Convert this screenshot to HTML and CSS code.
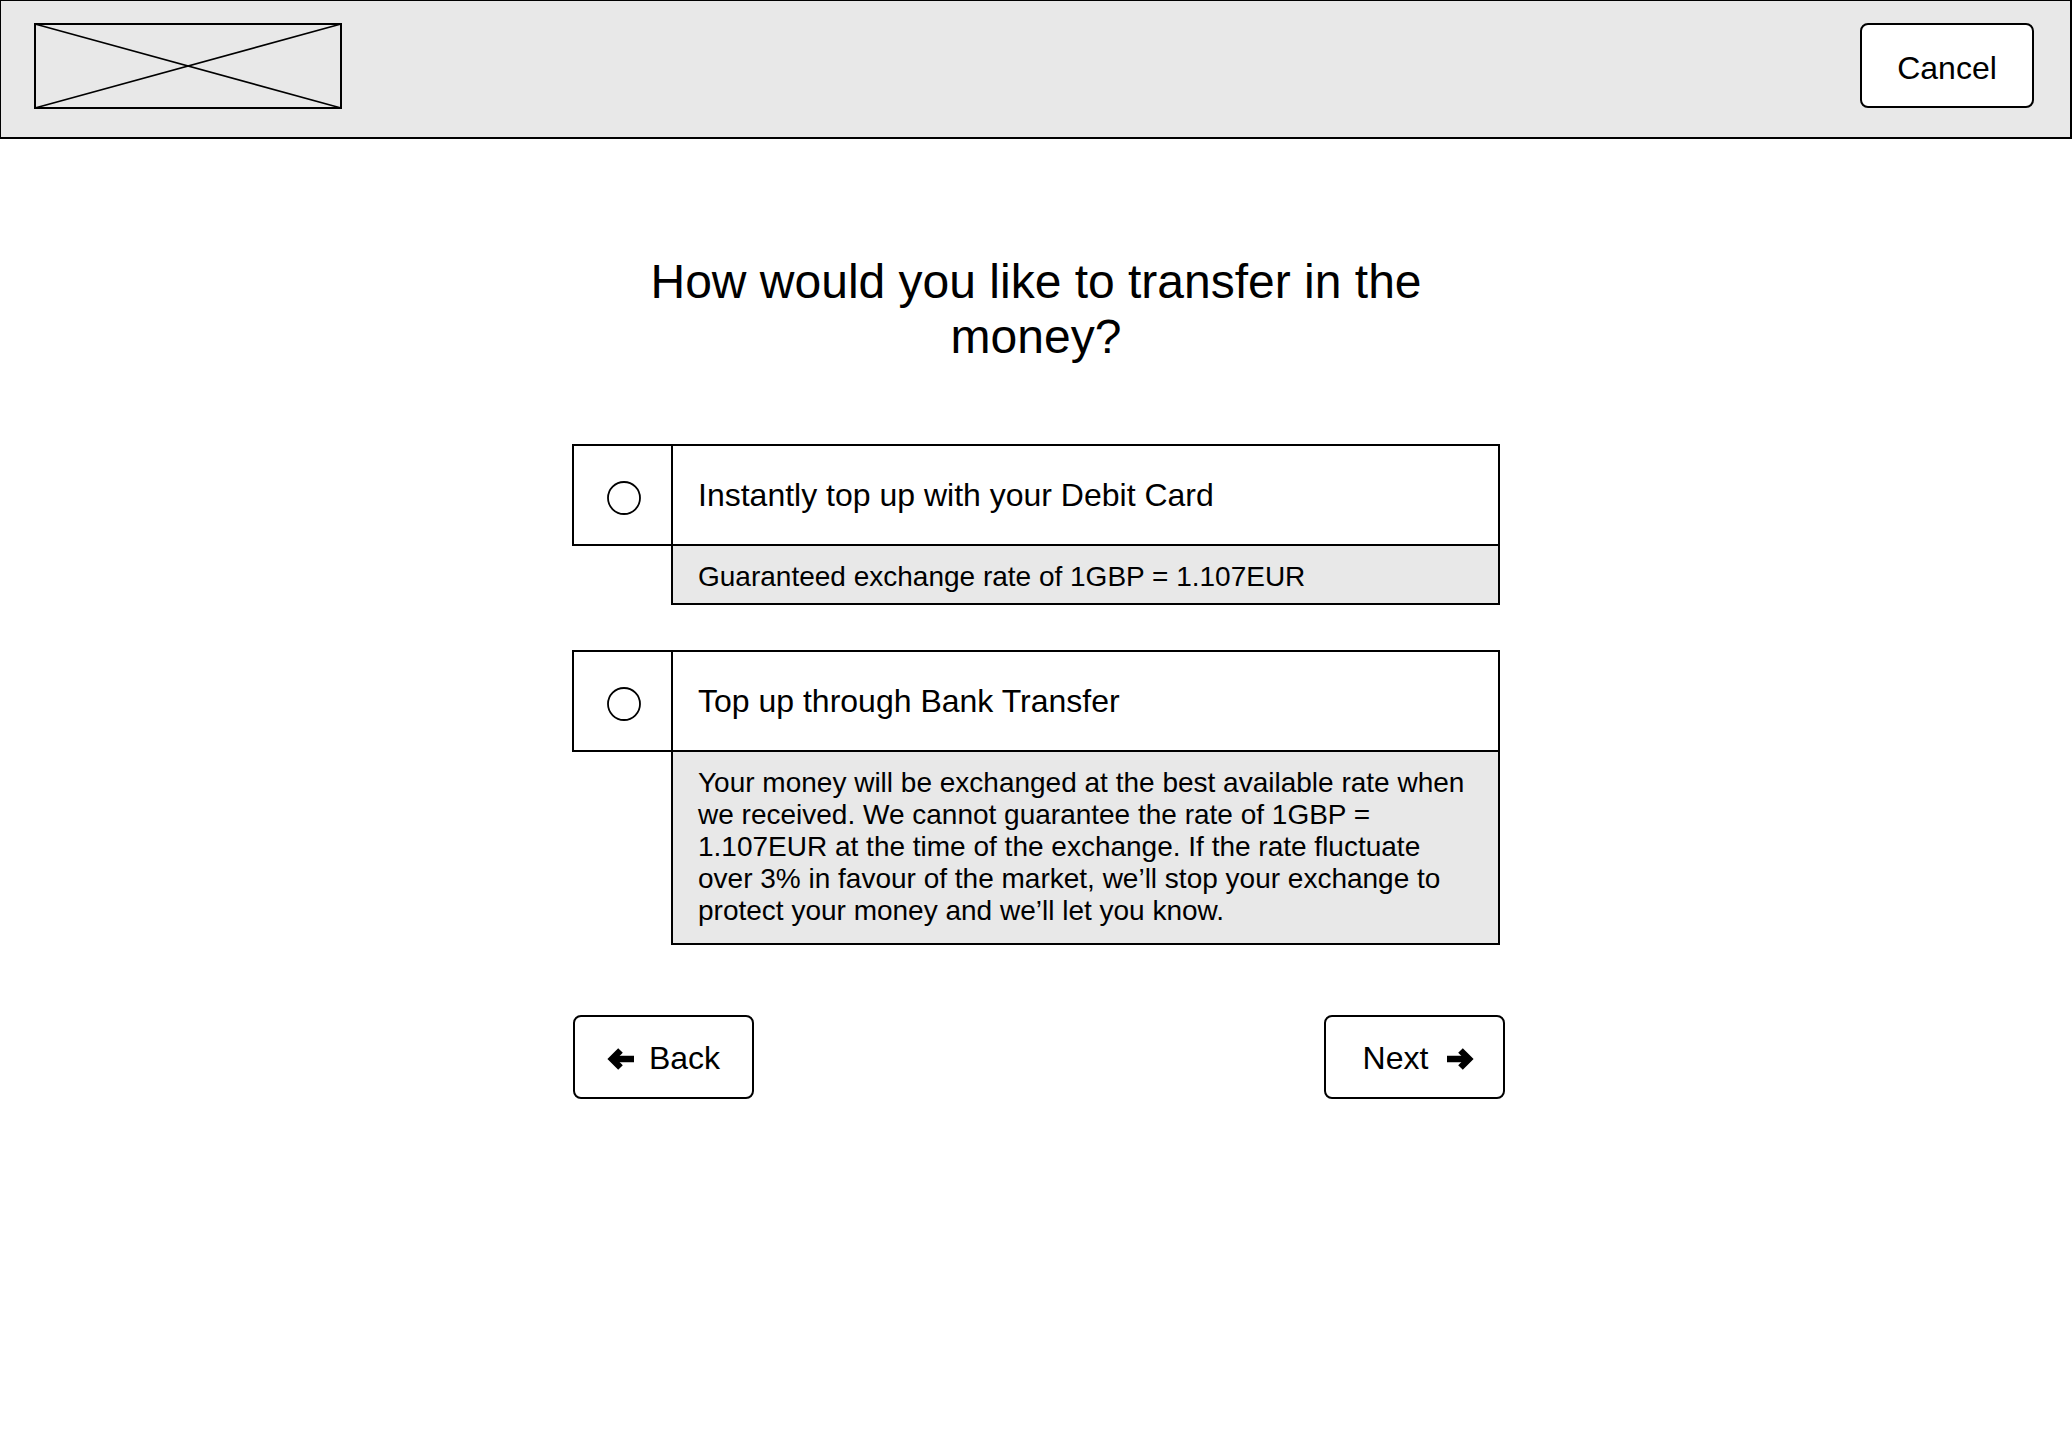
FILE: index.html
```html
<!DOCTYPE html>
<html lang="en">
<head>
<meta charset="utf-8">
<title>Top up</title>
<link rel="stylesheet" href="styles.css">
</head>
<body>
<header class="topbar">
  <svg class="logo" width="308" height="86" viewBox="0 0 308 86" aria-hidden="true">
    <rect x="1" y="1" width="306" height="84" fill="none" stroke="#000" stroke-width="2"/>
    <line x1="1" y1="1" x2="307" y2="85" stroke="#000" stroke-width="1.6"/>
    <line x1="1" y1="85" x2="307" y2="1" stroke="#000" stroke-width="1.6"/>
  </svg>
  <button class="btn btn-cancel">Cancel</button>
</header>

<main class="content">
  <h1 class="question">How would you like to transfer in the money?</h1>

  <div class="option">
    <div class="radio-cell">
      <svg width="36" height="36" viewBox="0 0 36 36" aria-hidden="true"><circle cx="18" cy="18" r="16" fill="#fff" stroke="#000" stroke-width="1.8"/></svg>
    </div>
    <div class="title-cell">Instantly top up with your Debit Card</div>
    <div class="desc-cell desc-short">Guaranteed exchange rate of 1GBP = 1.107EUR</div>
  </div>

  <div class="option option-second">
    <div class="radio-cell">
      <svg width="36" height="36" viewBox="0 0 36 36" aria-hidden="true"><circle cx="18" cy="18" r="16" fill="#fff" stroke="#000" stroke-width="1.8"/></svg>
    </div>
    <div class="title-cell">Top up through Bank Transfer</div>
    <div class="desc-cell desc-long">Your money will be exchanged at the best available rate when we received. We cannot guarantee the rate of 1GBP = 1.107EUR at the time of the exchange. If the rate fluctuate over 3% in favour of the market, we’ll stop your exchange to protect your money and we’ll let you know.</div>
  </div>

  <div class="nav">
    <button class="btn btn-nav btn-back">
      <svg class="arrow" width="28" height="22" viewBox="0 0 28 22" aria-hidden="true">
        <path d="M27 11 H6" stroke="#000" stroke-width="6.5" fill="none"/>
        <path d="M13.5 2.5 L5 11 L13.5 19.5" stroke="#000" stroke-width="6.5" fill="none" stroke-linejoin="miter"/>
      </svg>
      <span>Back</span>
    </button>
    <button class="btn btn-nav btn-next">
      <span>Next</span>
      <svg class="arrow" width="28" height="22" viewBox="0 0 28 22" aria-hidden="true">
        <path d="M1 11 H22" stroke="#000" stroke-width="6.5" fill="none"/>
        <path d="M14.5 2.5 L23 11 L14.5 19.5" stroke="#000" stroke-width="6.5" fill="none" stroke-linejoin="miter"/>
      </svg>
    </button>
  </div>
</main>
</body>
</html>
```

FILE: styles.css
```css
* { box-sizing: border-box; }

html, body {
  margin: 0;
  padding: 0;
  background: #ffffff;
  color: #000000;
  font-family: "Liberation Sans", Arial, Helvetica, sans-serif;
}

.topbar {
  height: 139px;
  display: flex;
  justify-content: space-between;
  align-items: flex-start;
  padding: 22px 36px 0 33px;
  background: #e8e8e8;
  border-top: 1px solid #000;
  border-left: 1px solid #000;
  border-right: 2px solid #000;
  border-bottom: 2px solid #000;
}

.logo { display: block; }

.btn {
  font-family: "Liberation Sans", Arial, Helvetica, sans-serif;
  font-size: 32px;
  color: #000;
  background: #ffffff;
  border: 2px solid #000;
  border-radius: 8px;
  display: flex;
  align-items: center;
  justify-content: center;
  padding: 0;
  cursor: pointer;
}

.btn-cancel {
  width: 174px;
  height: 85px;
  padding-top: 5px;
}

.content {
  width: 928px;
  margin: 0 auto;
  padding-top: 115px;
}

.question {
  margin: 0 0 80px;
  font-size: 48px;
  font-weight: normal;
  line-height: 55px;
  text-align: center;
}

.option {
  display: grid;
  grid-template-columns: 99px 829px;
  grid-template-rows: 102px auto;
}

.option-second { margin-top: 45px; }

.radio-cell {
  border-top: 2px solid #000;
  border-left: 2px solid #000;
  border-bottom: 2px solid #000;
  display: flex;
  align-items: center;
  justify-content: center;
  padding-left: 2px;
  padding-top: 5px;
}

.radio-cell svg { display: block; }

.title-cell {
  border: 2px solid #000;
  display: flex;
  align-items: center;
  padding-left: 25px;
  font-size: 32px;
}

.desc-cell {
  grid-column: 2;
  background: #e8e8e8;
  border-left: 2px solid #000;
  border-right: 2px solid #000;
  border-bottom: 2px solid #000;
  font-size: 28px;
  line-height: 32px;
  padding-left: 25px;
  padding-right: 26px;
}

.desc-short { padding-top: 15px; padding-bottom: 10px; }
.desc-long { padding-top: 15px; padding-bottom: 16px; }

.nav {
  display: flex;
  justify-content: space-between;
  margin: 70px -5px 0 1px;
}

.btn-nav {
  width: 181px;
  height: 84px;
  gap: 14px;
  padding-top: 3px;
}

.btn-next { gap: 18px; padding-left: 8px; }

.arrow { display: block; }
```
